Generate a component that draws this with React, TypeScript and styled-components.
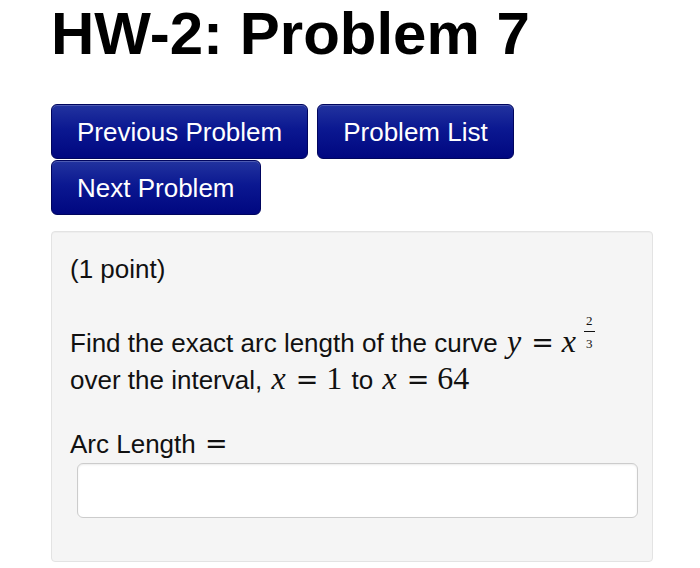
import styled, { createGlobalStyle } from "styled-components";

const GlobalStyle = createGlobalStyle`
  body {
    margin: 0;
    background: #ffffff;
    color: #000000;
    font-family: "Liberation Sans", Arial, Helvetica, sans-serif;
  }
`;

const Page = styled.div`
  width: 602px;
  margin-left: 51px;
  padding-top: 4px;
`;

const Title = styled.h1`
  margin: 0 0 40px 0;
  font-size: 60px;
  line-height: 60px;
  font-weight: bold;
  color: #000;
`;

/* ------------------ Navigation ------------------ */
const NavButtons = styled.div`
  display: flex;
  flex-wrap: wrap;
  column-gap: 9px;
  row-gap: 1px;
  margin-bottom: 16px;
`;

const NavButton = styled.button`
  height: 55px;
  padding: 0 25px;
  border: 1px solid #00055e;
  border-radius: 6px;
  background: linear-gradient(to bottom, #22339f 0%, #0b1891 45%, #000780 100%);
  box-shadow: inset 0 1px 0 rgba(255, 255, 255, 0.2);
  color: #ffffff;
  font-family: "Liberation Sans", Arial, Helvetica, sans-serif;
  font-size: 26px;
  line-height: 1;
  cursor: pointer;
`;

/* ------------------ Problem ------------------ */
const ProblemPanel = styled.div`
  padding: 19px 14px 43px 18px;
  background: #f5f5f5;
  border: 1px solid #e3e3e3;
  border-radius: 4px;
  box-shadow: inset 0 1px 1px rgba(0, 0, 0, 0.03);
`;

const Text = styled.p<{ $gap?: number }>`
  margin: ${(props) => props.$gap ?? 0}px 0 0 0;
  font-size: 26px;
  line-height: 37px;
  color: #111;
`;

const Math = styled.span`
  padding: 0 2px;
  font-family: "Liberation Serif", "Times New Roman", serif;
  font-size: 32px;
  line-height: 20px;
`;

const Var = styled.i`
  font-style: italic;
`;

const Rel = styled.span<{ $lead?: number }>`
  font-family: "DejaVu Serif", "Liberation Serif", serif;
  font-size: 27px;
  margin: 0 8px 0 ${(props) => props.$lead ?? 10}px;
`;

const Frac = styled.span`
  display: inline-block;
  margin: -12px 0 0 8px;
  font-size: 13px;
  line-height: 12px;
  text-align: center;
  vertical-align: 4px;
`;

const Num = styled.span`
  display: block;
  padding: 0 2px 4px;
  border-bottom: 1px solid #111;
`;

const Den = styled.span`
  display: block;
  padding-top: 6px;
`;

const AnswerInput = styled.input`
  display: block;
  box-sizing: border-box;
  width: calc(100% - 7px);
  height: 55px;
  margin-left: 7px;
  padding: 0 10px;
  background: #ffffff;
  border: 1px solid #cccccc;
  border-radius: 6px;
  box-shadow: inset 0 1px 2px rgba(0, 0, 0, 0.08);
  font-size: 24px;
  outline: none;
`;

const App = () => {
  return (
    <>
      <GlobalStyle />
      <Page>
        <Title>HW-2: Problem 7</Title>
        <NavButtons>
          <NavButton>Previous Problem</NavButton>
          <NavButton>Problem List</NavButton>
          <NavButton>Next Problem</NavButton>
        </NavButtons>
        <ProblemPanel>
          <Text>(1 point)</Text>
          <Text $gap={37}>
            Find the exact arc length of the curve{" "}
            <Math>
              <Var>y</Var>
              <Rel>=</Rel>
              <Var>x</Var>
              <Frac>
                <Num>2</Num>
                <Den>3</Den>
              </Frac>
            </Math>
            <br />
            over the interval,{" "}
            <Math>
              <Var>x</Var>
              <Rel>=</Rel>1
            </Math>{" "}
            to{" "}
            <Math>
              <Var>x</Var>
              <Rel>=</Rel>64
            </Math>
          </Text>
          <Text $gap={27}>
            Arc Length{" "}
            <Math>
              <Rel $lead={0}>=</Rel>
            </Math>
          </Text>
          <AnswerInput type="text" aria-label="Arc Length" />
        </ProblemPanel>
      </Page>
    </>
  );
};

export default App;
